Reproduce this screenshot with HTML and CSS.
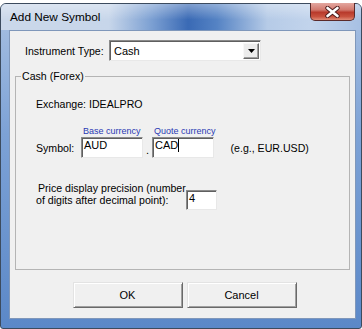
FILE: index.html
```html
<!DOCTYPE html>
<html>
<head>
<meta charset="utf-8"/>
<title>Add New Symbol</title>
<link rel="stylesheet" href="styles.css">
</head>
<body>
<div class="under"></div>
<div class="window">
  <div class="titlebar">
    <span class="title">Add New Symbol</span>
    <span class="close">
      <svg width="15" height="12" viewBox="0 0 15 12">
        <path d="M2.5 2 L12.5 10 M12.5 2 L2.5 10" stroke="#4a1a1a" stroke-width="4.4" stroke-linecap="round"/>
        <path d="M2.5 2 L12.5 10 M12.5 2 L2.5 10" stroke="#ffffff" stroke-width="2.6" stroke-linecap="round"/>
      </svg>
    </span>
  </div>
  <div class="client">
    <div class="type-row">
      <span class="type-label">Instrument Type:</span>
      <div class="combo">
        <span>Cash</span>
        <span class="drop">
          <svg width="7" height="4" viewBox="0 0 7 4"><path d="M0 0 H7 L3.5 4 Z" fill="#000"/></svg>
        </span>
      </div>
    </div>

    <fieldset class="group">
      <legend>Cash (Forex)</legend>
      <div class="exchange">Exchange: IDEALPRO</div>

      <div class="symbol-row">
        <span class="sym-label">Symbol:</span>
        <div class="cur">
          <span class="hint">Base currency</span>
          <span class="edit">AUD</span>
        </div>
        <span class="dot">.</span>
        <div class="cur">
          <span class="hint">Quote currency</span>
          <span class="edit">CAD<i class="caret"></i></span>
        </div>
        <span class="example">(e.g., EUR.USD)</span>
      </div>

      <div class="prec-row">
        <span class="prec-label"><span class="first">Price display precision (number</span><br>of digits after decimal point):</span>
        <span class="edit small">4</span>
      </div>
    </fieldset>

    <div class="buttons">
      <span class="btn">OK</span>
      <span class="btn">Cancel</span>
    </div>
  </div>
</div>
</body>
</html>
```

FILE: styles.css
```css
body {
  margin: 0;
  width: 362px;
  height: 329px;
  overflow: hidden;
  background: #fff;
  font-family: "Liberation Sans", Arial, sans-serif;
  font-size: 10.6px;
  color: #000;
}

.under {
  height: 3px;
  background: #fff;
}

.window {
  box-sizing: border-box;
  height: 326px;
  border: 1px solid #3c4b5e;
  border-radius: 6px 6px 3px 3px;
  background: linear-gradient(180deg, #a9c1e2 0%, #7da2d6 40%, #5b88c8 100%);
  padding: 0 5px 9px 8px;
  display: flex;
  flex-direction: column;
}

.titlebar {
  height: 26px;
  margin: 0 -5px 0 -8px;
  padding: 0 6px 0 9px;
  border-radius: 5px 5px 0 0;
  display: flex;
  justify-content: space-between;
  align-items: center;
  background:
    linear-gradient(180deg, rgba(255,255,255,0.35), rgba(255,255,255,0) 60%),
    linear-gradient(90deg, #cbd8ea 0%, #c7d6ea 30%, #7b9fd2 42%, #3a6ab5 52%, #5583c4 60%, #b6cbe7 74%, #c2d4ec 86%, #a7c0e3 100%);
}

.title {
  font-size: 11.8px;
  color: #000;
}

.close {
  align-self: flex-start;
  width: 45px;
  height: 18px;
  margin-top: -1px;
  box-sizing: border-box;
  border: 1px solid #5a2a2a;
  border-top: none;
  border-radius: 0 0 5px 5px;
  background: linear-gradient(180deg, #e3a7a0 0%, #d27a6f 40%, #b83a2c 55%, #c8523f 80%, #e08a76 100%);
  display: flex;
  justify-content: center;
  align-items: center;
}

.client {
  box-sizing: border-box;
  height: 289px;
  border: 1px solid #7f97ba;
  background: #f0f0f0;
  display: flex;
  flex-direction: column;
}

.type-row {
  display: flex;
  align-items: center;
  margin: 9px 0 0 15px;
  height: 21px;
}

.type-label {
  width: 84px;
}

.combo {
  box-sizing: border-box;
  width: 152px;
  height: 21px;
  border: 1px solid;
  border-color: #8a8a8a #e8e8e8 #e8e8e8 #8a8a8a;
  box-shadow: inset 1px 1px #5f5f5f;
  background: #fff;
  display: flex;
  align-items: center;
  justify-content: space-between;
  padding: 0 1px 0 4px;
  font-size: 11px;
}

.drop {
  box-sizing: border-box;
  width: 16px;
  height: 16px;
  border: 1px solid;
  border-color: #f8f8f8 #6a6a6a #6a6a6a #f8f8f8;
  box-shadow: inset -1px -1px #a0a0a0;
  background: #ececec;
  display: flex;
  align-items: center;
  justify-content: center;
}

.group {
  box-sizing: border-box;
  height: 200px;
  margin: 9px 5px 0 5px;
  padding: 0 0 0 20px;
  border: 1px solid #b4b4b4;
  min-width: 0;
}

.group legend {
  margin-left: -15px;
  padding: 0 1px;
  line-height: 13px;
}

.exchange {
  margin-top: 15px;
  line-height: 13px;
}

.symbol-row {
  display: flex;
  align-items: flex-end;
  margin-top: 15px;
}

.sym-label {
  width: 45px;
  line-height: 13px;
  margin-bottom: 3px;
}

.cur {
  display: flex;
  flex-direction: column;
}

.hint {
  font-size: 9px;
  line-height: 10px;
  color: #2a3ab4;
  padding-left: 2px;
  margin-bottom: 1px;
  white-space: nowrap;
}

.edit {
  box-sizing: border-box;
  display: block;
  width: 62px;
  height: 21px;
  border: 1px solid;
  border-color: #8a8a8a #e8e8e8 #e8e8e8 #8a8a8a;
  box-shadow: inset 1px 1px #5f5f5f;
  background: #fff;
  padding: 1px 0 0 2px;
  font-size: 11px;
  line-height: 13px;
}

.caret {
  display: inline-block;
  width: 1px;
  height: 13px;
  background: #000;
  vertical-align: top;
}

.dot {
  width: 9px;
  text-align: center;
  line-height: 13px;
  margin-bottom: 1px;
  font-size: 11px;
}

.example {
  margin-left: 15px;
  line-height: 13px;
  margin-bottom: 3px;
}

.prec-row {
  display: flex;
  align-items: flex-start;
  margin-top: 24px;
}

.prec-label {
  width: 150px;
  line-height: 12px;
  white-space: nowrap;
}

.prec-label .first {
  padding-left: 2px;
}

.edit.small {
  width: 31px;
  height: 20px;
  margin-top: 8px;
}

.buttons {
  display: flex;
  justify-content: center;
  gap: 4px;
  margin-top: 12px;
  padding-left: 4px;
}

.btn {
  box-sizing: border-box;
  width: 110px;
  height: 26px;
  border: 1px solid;
  border-color: #e3e3e3 #696969 #696969 #e3e3e3;
  box-shadow: inset 1px 1px #fff, inset -1px -1px #a0a0a0;
  background: #f0f0f0;
  display: flex;
  align-items: center;
  justify-content: center;
  font-size: 11px;
}
```
